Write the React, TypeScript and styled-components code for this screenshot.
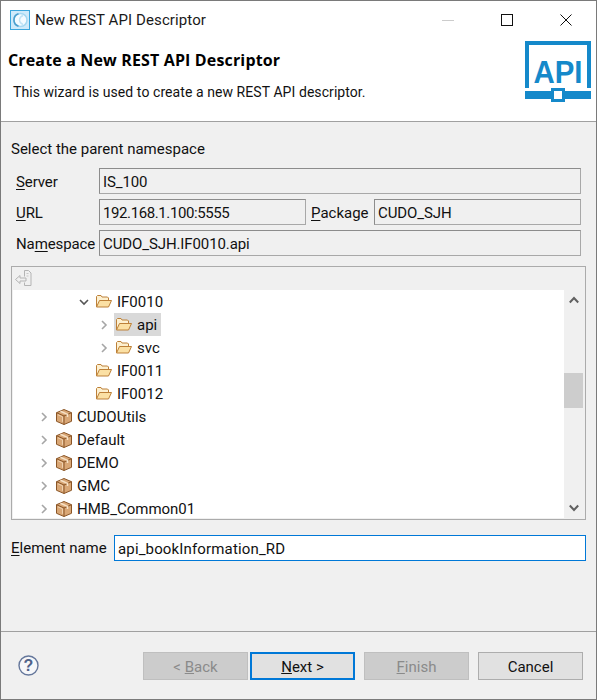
import React from 'react';
import styled, {createGlobalStyle} from 'styled-components';

const GlobalStyle = createGlobalStyle`
  html, body {
    margin: 0;
    padding: 0;
    background: #f0f0f0;
  }
  * {
    box-sizing: border-box;
  }
`;

interface TreeItem {
  label: string;
  level: number;
  kind: 'folder' | 'package';
  arrow?: 'open' | 'closed';
  selected?: boolean;
}

const TREE: TreeItem[] = [
  {label: 'IF0010', level: 2, kind: 'folder', arrow: 'open'},
  {label: 'api', level: 3, kind: 'folder', arrow: 'closed', selected: true},
  {label: 'svc', level: 3, kind: 'folder', arrow: 'closed'},
  {label: 'IF0011', level: 2, kind: 'folder'},
  {label: 'IF0012', level: 2, kind: 'folder'},
  {label: 'CUDOUtils', level: 0, kind: 'package', arrow: 'closed'},
  {label: 'Default', level: 0, kind: 'package', arrow: 'closed'},
  {label: 'DEMO', level: 0, kind: 'package', arrow: 'closed'},
  {label: 'GMC', level: 0, kind: 'package', arrow: 'closed'},
  {label: 'HMB_Common01', level: 0, kind: 'package', arrow: 'closed'},
];

const AppIcon = () => (
  <svg width="20" height="20" viewBox="0 0 20 20">
    <rect x="0.5" y="0.5" width="19" height="19" fill="#cfeafa" stroke="#3ba6dc" />
    <circle cx="10.5" cy="10" r="6.5" fill="#f4fbff" stroke="#a5d8f2" strokeWidth="1.5" />
    <path d="M8.5 3.8a6.5 6.5 0 0 0 0 12.4" fill="none" stroke="#4a9fce" strokeWidth="1.6" />
    <path d="M13 5.5a5 5 0 0 0-3.5 4.5 5 5 0 0 0 3.5 4.5" fill="none" stroke="#bfe3f6" strokeWidth="1.4" />
  </svg>
);

const ApiLogo = () => (
  <svg width="66" height="62" viewBox="0 0 66 62">
    <path d="M2 47V2h62v45" fill="none" stroke="#1589ca" strokeWidth="4" />
    <rect x="0" y="50" width="66" height="8" fill="#1589ca" />
    <rect x="27.5" y="48.5" width="11" height="11" fill="#ffffff" stroke="#1589ca" strokeWidth="3" />
    <text x="33" y="42" textAnchor="middle" fontFamily="'Liberation Sans', sans-serif" fontWeight="700" fontSize="32" fill="#1589ca" textLength="49" lengthAdjust="spacingAndGlyphs">API</text>
  </svg>
);

const FolderIcon = () => (
  <svg width="16" height="13" viewBox="0 0 16 13">
    <path d="M0.5 12V1.5l1-1h3.5l1 1.5h5.5l1 1v2" fill="#fdf0d0" stroke="#bd8038" />
    <path d="M0.5 12l3-6.5h12l-3 6.5z" fill="#fbe0a4" stroke="#bd8038" strokeLinejoin="round" />
  </svg>
);

const PackageIcon = () => (
  <svg width="16" height="16" viewBox="0 0 16 16">
    <path d="M8 0.5l7.5 3.2v8.6L8 15.5l-7.5-3.2V3.7z" fill="#d9a776" stroke="#8a5526" strokeLinejoin="round" />
    <path d="M0.5 3.7L8 7l7.5-3.3M8 7v8.5" fill="none" stroke="#8a5526" />
    <path d="M4.5 2.2L11.5 5.4V8" fill="none" stroke="#f6e2c8" strokeWidth="1.5" />
    <path d="M2 5.8l4.5 2v5" fill="none" stroke="#efd2b0" />
  </svg>
);

const Chevron = ({open, dark}: {open?: boolean; dark?: boolean}) => (
  <svg width="12" height="12" viewBox="0 0 12 12">
    <path
      d={open ? 'M2 4l4 4 4-4' : 'M4 2l4 4-4 4'}
      fill="none"
      stroke={dark ? '#555555' : '#a6a6a6'}
      strokeWidth="1.6"
    />
  </svg>
);

const ScrollArrow = ({up}: {up?: boolean}) => (
  <svg width="10" height="8" viewBox="0 0 10 8">
    <path d={up ? 'M0.8 6.5L5 2l4.2 4.5' : 'M0.8 1.5L5 6l4.2-4.5'} fill="none" stroke="#606060" strokeWidth="2" />
  </svg>
);

const CollapseIcon = () => (
  <svg width="17" height="17" viewBox="0 0 17 17">
    <path d="M9.5 6.5V0.5h4L16 3v12.5H9.5V12.5" fill="none" stroke="#b4b4b4" />
    <path d="M11.5 3.5h2M11.5 6h2" stroke="#c8c8c8" />
    <path d="M0.5 9.5L5 5.5V8h6v3H5v2.5z" fill="#f0f0f0" stroke="#b4b4b4" strokeLinejoin="round" />
  </svg>
);

const HelpIcon = () => (
  <svg width="21" height="21" viewBox="0 0 21 21">
    <circle cx="10.5" cy="10.5" r="9.5" fill="#f6f7f9" stroke="#65779b" strokeWidth="1.4" />
    <text x="10.5" y="16" textAnchor="middle" fontFamily="'Liberation Sans', sans-serif" fontWeight="700" fontSize="16" fill="#4f6289">?</text>
  </svg>
);

const App: React.FC = () => {
  return (
    <Window>
      <GlobalStyle />
      <TitleBar>
        <AppIcon />
        <TitleText>New REST API Descriptor</TitleText>
        <WindowButtons>
          <Minimize />
          <Maximize />
          <svg width="12" height="12" viewBox="0 0 12 12">
            <path d="M0.5 0.5l11 11M11.5 0.5l-11 11" stroke="#111111" strokeWidth="1" />
          </svg>
        </WindowButtons>
      </TitleBar>
      <Banner>
        <BannerText>
          <Heading>Create a New REST API Descriptor</Heading>
          <Description>This wizard is used to create a new REST API descriptor.</Description>
        </BannerText>
        <ApiLogo />
      </Banner>
      <Body>
        <SectionLabel>Select the parent namespace</SectionLabel>
        <FieldRow>
          <FieldLabel><u>S</u>erver</FieldLabel>
          <ReadField>IS_100</ReadField>
        </FieldRow>
        <FieldRow>
          <FieldLabel><u>U</u>RL</FieldLabel>
          <ReadField $tight>192.168.1.100:5555</ReadField>
          <InlineLabel><u>P</u>ackage</InlineLabel>
          <ReadField>CUDO_SJH</ReadField>
        </FieldRow>
        <FieldRow>
          <FieldLabel>Na<u>m</u>espace</FieldLabel>
          <ReadField>CUDO_SJH.IF0010.api</ReadField>
        </FieldRow>
        <TreeBox>
          <TreeToolbar>
            <CollapseIcon />
          </TreeToolbar>
          <TreeArea>
            <TreeList>
              {TREE.map(item => (
                <TreeRow key={item.label} $level={item.level}>
                  <ArrowSlot>
                    {item.arrow && <Chevron open={item.arrow === 'open'} dark={item.arrow === 'open'} />}
                  </ArrowSlot>
                  <NodeLabel $selected={item.selected}>
                    <IconSlot>{item.kind === 'folder' ? <FolderIcon /> : <PackageIcon />}</IconSlot>
                    {item.label}
                  </NodeLabel>
                </TreeRow>
              ))}
            </TreeList>
            <ScrollBar>
              <ScrollButton><ScrollArrow up /></ScrollButton>
              <ScrollTrack>
                <ScrollThumb />
              </ScrollTrack>
              <ScrollButton><ScrollArrow /></ScrollButton>
            </ScrollBar>
          </TreeArea>
        </TreeBox>
        <ElementRow>
          <ElementLabel><u>E</u>lement name</ElementLabel>
          <ElementInput readOnly value="api_bookInformation_RD" />
        </ElementRow>
      </Body>
      <Footer>
        <HelpIcon />
        <ButtonGroup>
          <WizardButton disabled>&lt; <u>B</u>ack</WizardButton>
          <WizardButton $primary><u>N</u>ext &gt;</WizardButton>
          <FinishButton disabled><u>F</u>inish</FinishButton>
          <FinishSpacer />
          <WizardButton>Cancel</WizardButton>
        </ButtonGroup>
      </Footer>
    </Window>
  );
};

export default App;

const Window = styled.div`
  width: 597px;
  height: 700px;
  display: flex;
  flex-direction: column;
  background: #f0f0f0;
  border: 1px solid #7a7a7a;
  font-family: Roboto, 'Open Sans', sans-serif;
  font-size: 15px;
  color: #111111;
  overflow: hidden;
`;

const TitleBar = styled.div`
  height: 39px;
  flex: none;
  display: flex;
  align-items: center;
  padding: 0 24px 1px 9px;
  background: #ffffff;
`;

const TitleText = styled.div`
  margin-left: 5px;
  color: #1a1a1a;
  letter-spacing: 0.1px;
`;

const WindowButtons = styled.div`
  margin-left: auto;
  display: flex;
  align-items: center;
`;

const Minimize = styled.div`
  width: 12px;
  height: 1px;
  background: #cccccc;
`;

const Maximize = styled.div`
  width: 12px;
  height: 12px;
  margin: 0 47px;
  border: 1px solid #111111;
`;

const Banner = styled.div`
  height: 82px;
  flex: none;
  display: flex;
  justify-content: space-between;
  align-items: flex-start;
  padding: 1px 5px 0 7px;
  background: #ffffff;
  border-bottom: 1px solid #a0a0a0;
`;

const BannerText = styled.div`
  display: flex;
  flex-direction: column;
`;

const Heading = styled.div`
  font-family: 'Open Sans', sans-serif;
  font-size: 16px;
  font-weight: 700;
  line-height: 20px;
  margin-top: 9px;
  letter-spacing: 0.15px;
  color: #000000;
`;

const Description = styled.div`
  margin: 12px 0 0 5px;
  font-size: 14px;
  line-height: 20px;
  letter-spacing: 0.07px;
`;

const Body = styled.div`
  flex: 1;
  display: flex;
  flex-direction: column;
  padding: 17px 10px 0 10px;
  u {
    text-underline-offset: 2px;
  }
`;

const SectionLabel = styled.div`
  line-height: 20px;
  height: 29px;
`;

const FieldRow = styled.div`
  display: flex;
  align-items: center;
  height: 26px;
  margin-bottom: 5px;
  padding-right: 5px;
`;

const FieldLabel = styled.div`
  width: 88px;
  flex: none;
  padding: 1px 0 0 5px;
  letter-spacing: -0.1px;
  white-space: nowrap;
`;

const InlineLabel = styled.div`
  width: 68px;
  flex: none;
  padding: 1px 0 0 5px;
  white-space: nowrap;
`;

const ReadField = styled.div<{$tight?: boolean}>`
  flex: 1;
  height: 26px;
  padding: 1px 0 0 3px;
  line-height: 24px;
  letter-spacing: ${props => (props.$tight ? '-0.4px' : '-0.1px')};
  background: #f0f0f0;
  border: 1px solid #8c8c8c;
  border-color: #8c8c8c #a8a8a8 #a8a8a8 #8c8c8c;
`;

const TreeBox = styled.div`
  height: 254px;
  margin-top: 5px;
  flex: none;
  display: flex;
  flex-direction: column;
  border: 1px solid #ababab;
  padding: 0 1px 1px 1px;
`;

const TreeToolbar = styled.div`
  height: 23px;
  flex: none;
  display: flex;
  align-items: center;
  padding: 0 0 0 2px;
`;

const TreeArea = styled.div`
  flex: 1;
  min-height: 0;
  display: flex;
`;

const TreeList = styled.div`
  flex: 1;
  background: #ffffff;
  overflow: hidden;
`;

const TreeRow = styled.div<{$level: number}>`
  height: 23px;
  display: flex;
  align-items: center;
  padding-left: ${props => 25 + props.$level * 20}px;
`;

const ArrowSlot = styled.div`
  width: 12px;
  height: 12px;
  flex: none;
  display: flex;
`;

const NodeLabel = styled.div<{$selected?: boolean}>`
  height: 23px;
  display: flex;
  align-items: center;
  padding: 0 4px 0 2px;
  margin-left: 4px;
  background: ${props => (props.$selected ? '#d9d9d9' : 'transparent')};
`;

const IconSlot = styled.div`
  width: 16px;
  height: 16px;
  margin-right: 5px;
  display: flex;
  align-items: center;
`;

const ScrollBar = styled.div`
  width: 19px;
  flex: none;
  display: flex;
  flex-direction: column;
  background: #f0f0f0;
  margin-right: 1px;
`;

const ScrollButton = styled.div`
  height: 20px;
  flex: none;
  display: flex;
  align-items: center;
  justify-content: center;
`;

const ScrollTrack = styled.div`
  flex: 1;
  padding-top: 63px;
`;

const ScrollThumb = styled.div`
  height: 35px;
  background: #cdcdcd;
`;

const ElementRow = styled.div`
  display: flex;
  align-items: center;
  margin-top: 15px;
`;

const ElementLabel = styled.div`
  width: 103px;
  flex: none;
  white-space: nowrap;
`;

const ElementInput = styled.input`
  width: 472px;
  height: 26px;
  padding: 1px 3px 0;
  font-family: inherit;
  font-size: 15px;
  letter-spacing: 0.15px;
  color: #111111;
  background: #ffffff;
  border: 1px solid #0078d7;
  outline: none;
`;

const Footer = styled.div`
  height: 68px;
  flex: none;
  display: flex;
  align-items: flex-start;
  padding: 20px 13px 0 17px;
  border-top: 1px solid #a0a0a0;
  svg {
    margin-top: 3px;
  }
`;

const ButtonGroup = styled.div`
  margin-left: auto;
  display: flex;
  gap: 2px;
`;

const WizardButton = styled.button<{$primary?: boolean}>`
  width: 105px;
  height: 28px;
  padding: 1px 0 0;
  font-family: inherit;
  font-size: 15px;
  color: #111111;
  background: #e1e1e1;
  border: ${props => (props.$primary ? '2px solid #0078d7' : '1px solid #adadad')};
  &:disabled {
    color: #8a8a8a;
    background: #cccccc;
    border: 1px solid #bfbfbf;
  }
`;

const FinishButton = styled(WizardButton)`
  margin-left: 7px;
`;

const FinishSpacer = styled.div`
  width: 5px;
`;
